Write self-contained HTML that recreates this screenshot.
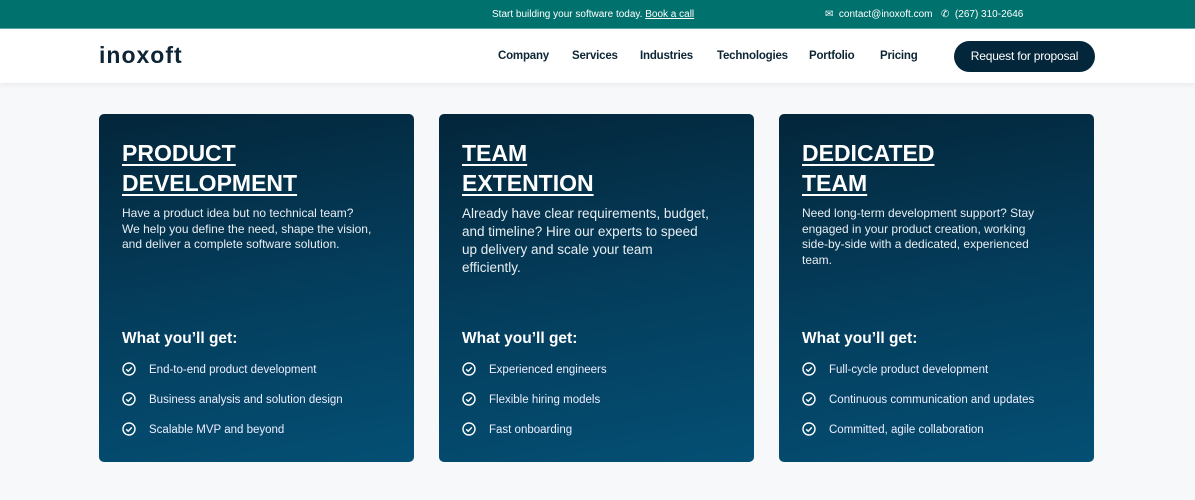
<!DOCTYPE html>
<html><head><meta charset="utf-8"><style>
*{margin:0;padding:0;box-sizing:border-box}
body{width:1195px;height:500px;overflow:hidden;background:#f7f8fa;font-family:"Liberation Sans",sans-serif;position:relative}
.top{height:29px;background:#00716d;color:#fff;font-size:10px;position:relative;border-bottom:1px solid #5aa}
.top span{position:absolute;top:9px}
.top u{text-decoration:underline}
.nav{height:54px;background:#fff;position:relative;box-shadow:0 2px 6px rgba(0,0,0,.06)}
.logo{position:absolute;left:99px;top:13px;font-size:23px;font-weight:bold;color:#0d2535;letter-spacing:1px}
.menu a{position:absolute;top:21px;font-size:11.5px;font-weight:bold;color:#0d2535;text-decoration:none;letter-spacing:-.2px}
.btn{position:absolute;left:954px;top:12px;width:141px;height:31px;border-radius:16px;background:#03263a;color:#fff;font-size:12px;text-align:center;line-height:31px;letter-spacing:-.2px}
.card{position:absolute;top:114px;width:315px;height:348px;border-radius:5px;background:linear-gradient(170deg,#03263a 0%,#043d5c 50%,#044f74 100%);color:#fff}
.card h2{position:absolute;left:23px;top:24px;font-size:23px;line-height:30px;text-decoration:underline;text-decoration-thickness:2px;text-underline-offset:3px;font-weight:bold}
.card p{position:absolute;left:23px;top:92px;font-size:12px;line-height:15.5px;width:280px;color:#e8eef2}
.card p.big{font-size:13.5px;line-height:18px;top:91px;width:280px}
.card h3{position:absolute;left:23px;top:216px;font-size:15.5px;font-weight:bold}
.card ul{position:absolute;left:23px;top:247px;list-style:none}
.card li{height:30px;font-size:11.5px;position:relative;padding-left:27px;line-height:18px;color:#eef}
.card li svg{position:absolute;left:0;top:1px}
</style></head><body>
<div class="top">
<span style="left:492px">Start building your software today. <u>Book a call</u></span>
<span style="left:825px">&#9993;&nbsp; contact@inoxoft.com</span>
<span style="left:941px">&#9990;&nbsp; (267) 310-2646</span>
</div>
<div class="nav">
<div class="logo">inoxoft</div>
<div class="menu"><a style="left:498px">Company</a><a style="left:572px">Services</a><a style="left:640px">Industries</a><a style="left:717px">Technologies</a><a style="left:809px">Portfolio</a><a style="left:880px">Pricing</a></div>
<div class="btn">Request for proposal</div>
</div>
<svg width="0" height="0" style="position:absolute"><defs><g id="c"><circle cx="7" cy="7" r="6" fill="none" stroke="#fff" stroke-width="1.4"/><path d="M4.2 7.2l2 2 3.6-3.8" fill="none" stroke="#fff" stroke-width="1.4"/></g></defs></svg>
<div class="card" style="left:99px"><h2>PRODUCT<br>DEVELOPMENT</h2>
<p>Have a product idea but no technical team?<br>We help you define the need, shape the vision,<br>and deliver a complete software solution.</p>
<h3>What you’ll get:</h3>
<ul><li><svg width="14" height="14"><use href="#c"/></svg>End-to-end product development</li><li><svg width="14" height="14"><use href="#c"/></svg>Business analysis and solution design</li><li><svg width="14" height="14"><use href="#c"/></svg>Scalable MVP and beyond</li></ul></div>
<div class="card" style="left:439px"><h2>TEAM<br>EXTENTION</h2>
<p class="big">Already have clear requirements, budget,<br>and timeline? Hire our experts to speed<br>up delivery and scale your team<br>efficiently.</p>
<h3>What you’ll get:</h3>
<ul><li><svg width="14" height="14"><use href="#c"/></svg>Experienced engineers</li><li><svg width="14" height="14"><use href="#c"/></svg>Flexible hiring models</li><li><svg width="14" height="14"><use href="#c"/></svg>Fast onboarding</li></ul></div>
<div class="card" style="left:779px"><h2>DEDICATED<br>TEAM</h2>
<p>Need long-term development support? Stay<br>engaged in your product creation, working<br>side-by-side with a dedicated, experienced<br>team.</p>
<h3>What you’ll get:</h3>
<ul><li><svg width="14" height="14"><use href="#c"/></svg>Full-cycle product development</li><li><svg width="14" height="14"><use href="#c"/></svg>Continuous communication and updates</li><li><svg width="14" height="14"><use href="#c"/></svg>Committed, agile collaboration</li></ul></div>
</body></html>
